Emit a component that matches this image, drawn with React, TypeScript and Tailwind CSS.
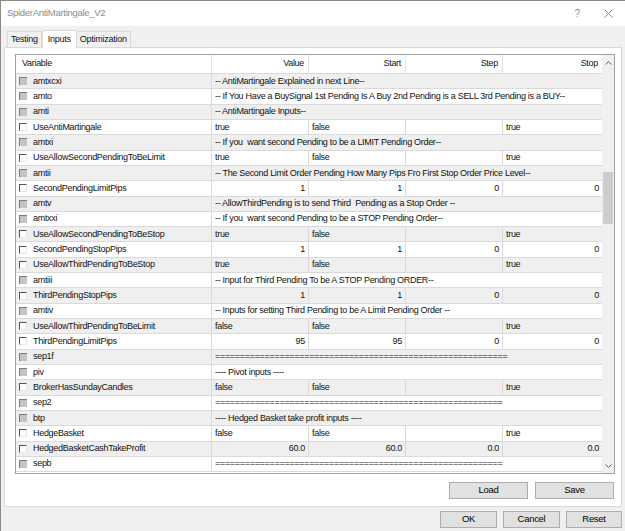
import React from 'react'

type Row =
  | { name: string; sep: string }
  | { name: string; vals: [string, string, string, string]; num?: boolean }

const rows: Row[] = [
  { name: 'amtxcxi', sep: '-- AntiMartingale Explained in next Line--' },
  { name: 'amto', sep: '-- If You Have a BuySignal 1st Pending Is A Buy 2nd Pending is a SELL 3rd Pending is a BUY--' },
  { name: 'amti', sep: '-- AntiMartingale Inputs--' },
  { name: 'UseAntiMartingale', vals: ['true', 'false', '', 'true'] },
  { name: 'amtxi', sep: '-- If you  want second Pending to be a LIMIT Pending Order--' },
  { name: 'UseAllowSecondPendingToBeLimit', vals: ['true', 'false', '', 'true'] },
  { name: 'amtii', sep: '-- The Second Limit Order Pending How Many Pips Fro First Stop Order Price Level--' },
  { name: 'SecondPendingLimitPips', vals: ['1', '1', '0', '0'], num: true },
  { name: 'amtv', sep: '-- AllowThirdPending is to send Third  Pending as a Stop Order --' },
  { name: 'amtxxi', sep: '-- If you  want second Pending to be a STOP Pending Order--' },
  { name: 'UseAllowSecondPendingToBeStop', vals: ['true', 'false', '', 'true'] },
  { name: 'SecondPendingStopPips', vals: ['1', '1', '0', '0'], num: true },
  { name: 'UseAllowThirdPendingToBeStop', vals: ['true', 'false', '', 'true'] },
  { name: 'amtiii', sep: '-- Input for Third Pending To be A STOP Pending ORDER--' },
  { name: 'ThirdPendingStopPips', vals: ['1', '1', '0', '0'], num: true },
  { name: 'amtiv', sep: '-- Inputs for setting Third Pending to be A Limit Pending Order --' },
  { name: 'UseAllowThirdPendingToBeLimit', vals: ['false', 'false', '', 'true'] },
  { name: 'ThirdPendingLimitPips', vals: ['95', '95', '0', '0'], num: true },
  { name: 'sep1f', sep: '='.repeat(59) },
  { name: 'piv', sep: '---- Pivot inputs ----' },
  { name: 'BrokerHasSundayCandles', vals: ['false', 'false', '', 'true'] },
  { name: 'sep2', sep: '='.repeat(58) },
  { name: 'btp', sep: '---- Hedged Basket take profit inputs ----' },
  { name: 'HedgeBasket', vals: ['false', 'false', '', 'true'] },
  { name: 'HedgedBasketCashTakeProfit', vals: ['60.0', '60.0', '0.0', '0.0'], num: true },
  { name: 'sepb', sep: '='.repeat(58) },
]

const grid = 'grid grid-cols-[196px_97px_97px_97px_1fr]'

function Check({ disabled }: { disabled: boolean }) {
  return disabled ? (
    <div className="w-[8px] h-[8px] border-t border-l border-[#7c7c7c] bg-[#c4c4c4] shrink-0" />
  ) : (
    <div className="w-[8px] h-[8px] border-t border-l border-[#555] border-r border-b border-r-[#e6e6e6] border-b-[#e6e6e6] bg-white shrink-0" />
  )
}

function Btn({ label, w }: { label: string; w: string }) {
  return (
    <div className={`${w} h-[17px] bg-[#e1e1e1] border border-[#adadad] flex items-center justify-center text-[9.5px] tracking-[-0.3px] text-black`}>
      {label}
    </div>
  )
}

export default function App() {
  return (
    <div className="w-[625px] h-[531px] bg-[#f0f0f0] border-l border-t border-[#8a8a8a] flex flex-col overflow-hidden text-[#111] [font-family:'Liberation_Sans',Arial,sans-serif]">
      {/* title bar */}
      <div className="h-[25px] bg-white flex items-center justify-between pl-[6px] pr-[12px] shrink-0">
        <span className="text-[9.5px] tracking-[-0.3px] text-[#8c8c8c]">SpiderAntiMartingale_V2</span>
        <div className="flex items-center gap-[24px] text-[#8c8c8c]">
          <span className="text-[10px]">?</span>
          <svg width="9" height="9" viewBox="0 0 9 9">
            <path d="M0.5 0.5l8 8M8.5 0.5l-8 8" stroke="#8c8c8c" strokeWidth="1" />
          </svg>
        </div>
      </div>

      {/* tabs */}
      <div className="h-[21px] flex items-end pl-[6px] shrink-0 text-[9px] tracking-[-0.25px]">
        <div className="h-[16px] px-[3px] border border-b-0 border-[#d9d9d9] bg-[#f0f0f0] flex items-center">Testing</div>
        <div className="h-[18px] px-[5px] border border-b-0 border-[#d9d9d9] bg-white flex items-center -mb-px relative">Inputs</div>
        <div className="h-[16px] px-[3px] border border-b-0 border-l-0 border-[#d9d9d9] bg-[#f0f0f0] flex items-center">Optimization</div>
      </div>

      {/* panel */}
      <div className="mx-[3px] h-[460px] bg-white border border-[#d9d9d9] flex flex-col shrink-0">
        <div className="mt-[6px] ml-[10px] mr-[6px] h-[420px] border border-[#a0a0a0] flex text-[9px] tracking-[-0.3px]">
          <div className="flex-1 flex flex-col min-w-0">
            {/* header */}
            <div className={`${grid} h-[19px] border-b border-[#d8d8d8] shrink-0`}>
              <div className="pl-[6px] flex items-center border-r border-[#e2e2e2]">Variable</div>
              <div className="pr-[4px] flex items-center justify-end border-r border-[#e2e2e2]">Value</div>
              <div className="pr-[4px] flex items-center justify-end border-r border-[#e2e2e2]">Start</div>
              <div className="pr-[4px] flex items-center justify-end border-r border-[#e2e2e2]">Step</div>
              <div className="pr-[4px] flex items-center justify-end">Stop</div>
            </div>
            {rows.map((r, i) => {
              const bg = i % 2 === 0 ? 'bg-[#efefef]' : 'bg-white'
              const isSep = 'sep' in r
              return (
                <div key={r.name} className={`${grid} h-[15.32px] border-b border-[#dadada] ${bg} shrink-0`}>
                  <div className="flex items-center gap-[6px] pl-[3px] border-r border-[#dadada]">
                    <Check disabled={isSep} />
                    <span className="leading-none">{r.name}</span>
                  </div>
                  {isSep ? (
                    <div className="col-span-4 pl-[3px] flex items-center whitespace-pre overflow-hidden leading-none">{r.sep}</div>
                  ) : (
                    r.vals.map((v, j) => (
                      <div
                        key={j}
                        className={`flex items-center leading-none ${j < 3 ? 'border-r border-[#dadada]' : ''} ${r.num ? 'justify-end pr-[3px]' : 'pl-[3px]'}`}
                      >
                        {v}
                      </div>
                    ))
                  )}
                </div>
              )
            })}
          </div>
          {/* scrollbar */}
          <div className="w-[12px] bg-[#f0f0f0] flex flex-col items-center shrink-0">
            <div className="h-[16px] flex items-center justify-center">
              <svg width="7" height="4" viewBox="0 0 7 4">
                <path d="M0.5 3.5l3-3 3 3" stroke="#606060" fill="none" />
              </svg>
            </div>
            <div className="mt-[101px] w-[10px] h-[52px] bg-[#cdcdcd]" />
            <div className="flex-1" />
            <div className="h-[14px] flex items-center justify-center">
              <svg width="7" height="4" viewBox="0 0 7 4">
                <path d="M0.5 0.5l3 3 3-3" stroke="#606060" fill="none" />
              </svg>
            </div>
          </div>
        </div>
        <div className="flex justify-end gap-[7px] pr-[7px] mt-[8px]">
          <Btn label="Load" w="w-[79px]" />
          <Btn label="Save" w="w-[79px]" />
        </div>
      </div>

      {/* bottom buttons */}
      <div className="flex justify-end gap-[6px] pr-[3px] mt-[4px]">
        <Btn label="OK" w="w-[57px]" />
        <Btn label="Cancel" w="w-[57px]" />
        <Btn label="Reset" w="w-[56px]" />
      </div>
    </div>
  )
}
